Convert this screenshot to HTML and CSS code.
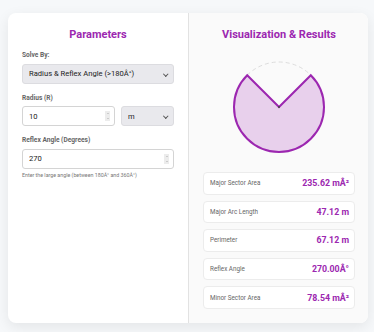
FILE: index.html
```html
<!DOCTYPE html>
<html lang="en">
<head>
<meta charset="utf-8">
<title>Reflex Sector Calculator</title>
<link rel="stylesheet" href="styles.css">
</head>
<body>
<main class="card">
  <section class="pane pane-params">
    <h2 class="pane-title">Parameters</h2>
    <div class="group">
      <label class="label" for="solve">Solve By:</label>
      <div class="select-wrap">
        <select id="solve" class="control select">
          <option>Radius &amp; Reflex Angle (&gt;180Â°)</option>
        </select>
      </div>
    </div>
    <div class="group">
      <label class="label" for="radius">Radius (R)</label>
      <div class="row">
        <div class="num-wrap grow">
          <input id="radius" class="control input" type="text" value="10">
          <span class="spin"><span class="spin-up"></span><span class="spin-down"></span></span>
        </div>
        <div class="select-wrap unit">
          <select class="control select"><option>m</option></select>
        </div>
      </div>
    </div>
    <div class="group">
      <label class="label" for="angle">Reflex Angle (Degrees)</label>
      <div class="num-wrap">
        <input id="angle" class="control input" type="text" value="270">
        <span class="spin"><span class="spin-up"></span><span class="spin-down"></span></span>
      </div>
      <p class="hint">Enter the large angle (between 180Â° and 360Â°)</p>
    </div>
  </section>
  <section class="pane pane-results">
    <h2 class="pane-title">Visualization &amp; Results</h2>
    <div class="viz">
      <svg width="100" height="100" viewBox="0 0 100 100">
        <path d="M18.18 18.18 A45 45 0 0 1 81.82 18.18" fill="none" stroke="#dddddd" stroke-width="1" stroke-dasharray="4 3"/>
        <path d="M50 50 L18.18 18.18 A45 45 0 1 0 81.82 18.18 Z" fill="#e8d0ec" stroke="#9c27b0" stroke-width="2" stroke-linejoin="miter"/>
        <circle cx="50" cy="50" r="1" fill="#444"/>
      </svg>
    </div>
    <ul class="results">
      <li class="result"><span class="r-label">Major Sector Area</span><span class="r-value">235.62 mÂ²</span></li>
      <li class="result"><span class="r-label">Major Arc Length</span><span class="r-value">47.12 m</span></li>
      <li class="result"><span class="r-label">Perimeter</span><span class="r-value">67.12 m</span></li>
      <li class="result"><span class="r-label">Reflex Angle</span><span class="r-value">270.00Â°</span></li>
      <li class="result"><span class="r-label">Minor Sector Area</span><span class="r-value">78.54 mÂ²</span></li>
    </ul>
  </section>
</main>
</body>
</html>
```

FILE: styles.css
```css
* { box-sizing: border-box; }
html, body { margin: 0; padding: 0; }
body {
  background: #f6f8fa;
  font-family: Roboto, "Noto Sans", sans-serif;
  color: #333;
  padding: 13px 6px 10px 8px;
}
.card {
  display: flex;
  width: 360px;
  background: #fff;
  border-radius: 8px;
  box-shadow: 0 4px 14px rgba(0, 0, 0, 0.08);
  overflow: hidden;
}
.pane { flex: 1 1 0; padding: 14px 14px 14px 14px; }
.pane-results {
  background: #fafafa;
  border-left: 1px solid #e2e2e2;
  padding: 14px 13px 14px 14px;
}
.pane-title {
  margin: 0;
  text-align: center;
  color: #9c27b0;
  font-size: 11px;
  line-height: 16px;
  font-weight: 700;
}
.pane-params .pane-title { margin-bottom: 8px; }
.group { margin-bottom: 10px; }
.label {
  display: block;
  font-size: 6.6px;
  line-height: 9px;
  font-weight: 700;
  color: #666;
  margin-bottom: 3.5px;
}
.control {
  display: block;
  width: 100%;
  height: 20px;
  font-family: inherit;
  font-size: 7.6px;
  color: #222;
  border-radius: 3px;
  margin: 0;
  outline: none;
}
.select {
  appearance: none;
  -webkit-appearance: none;
  background: #e9e9ed;
  border: 1px solid #dcdce0;
  padding: 0 16px 0 6px;
}
.select-wrap, .num-wrap { position: relative; }
.select-wrap::after {
  content: "";
  position: absolute;
  right: 7px;
  top: 8px;
  width: 2.5px;
  height: 2.5px;
  border-right: 1px solid #555;
  border-bottom: 1px solid #555;
  transform: rotate(45deg);
  pointer-events: none;
}
.input {
  background: #fff;
  border: 1px solid #d4d4d4;
  padding: 0 16px 0 6px;
}
.spin {
  position: absolute;
  right: 5px;
  top: 5px;
  width: 5px;
  height: 10px;
  background: #ececec;
  display: flex;
  flex-direction: column;
  align-items: center;
  justify-content: space-around;
  pointer-events: none;
}
.spin-up, .spin-down {
  width: 0;
  height: 0;
  border-left: 1.5px solid transparent;
  border-right: 1.5px solid transparent;
}
.spin-up { border-bottom: 1.5px solid #aaa; }
.spin-down { border-top: 1.5px solid #aaa; }
.row { display: flex; gap: 6px; }
.grow { flex: 1 1 auto; }
.unit { flex: 0 0 53px; }
.hint {
  margin: 3px 0 0;
  font-size: 5.3px;
  line-height: 7px;
  color: #777;
}
.viz {
  display: flex;
  justify-content: center;
  margin: 13.5px 0 15.5px;
}
.viz svg { display: block; }
.results {
  list-style: none;
  margin: 0;
  padding: 0;
  display: flex;
  flex-direction: column;
  gap: 6px;
}
.result {
  display: flex;
  justify-content: space-between;
  align-items: center;
  height: 22.6px;
  padding: 0 5px 0 6px;
  background: #fff;
  border: 1px solid #ececec;
  border-radius: 4px;
}
.r-label { font-size: 6.3px; color: #666; }
.r-value { font-size: 8.8px; font-weight: 700; color: #9c27b0; }
```
